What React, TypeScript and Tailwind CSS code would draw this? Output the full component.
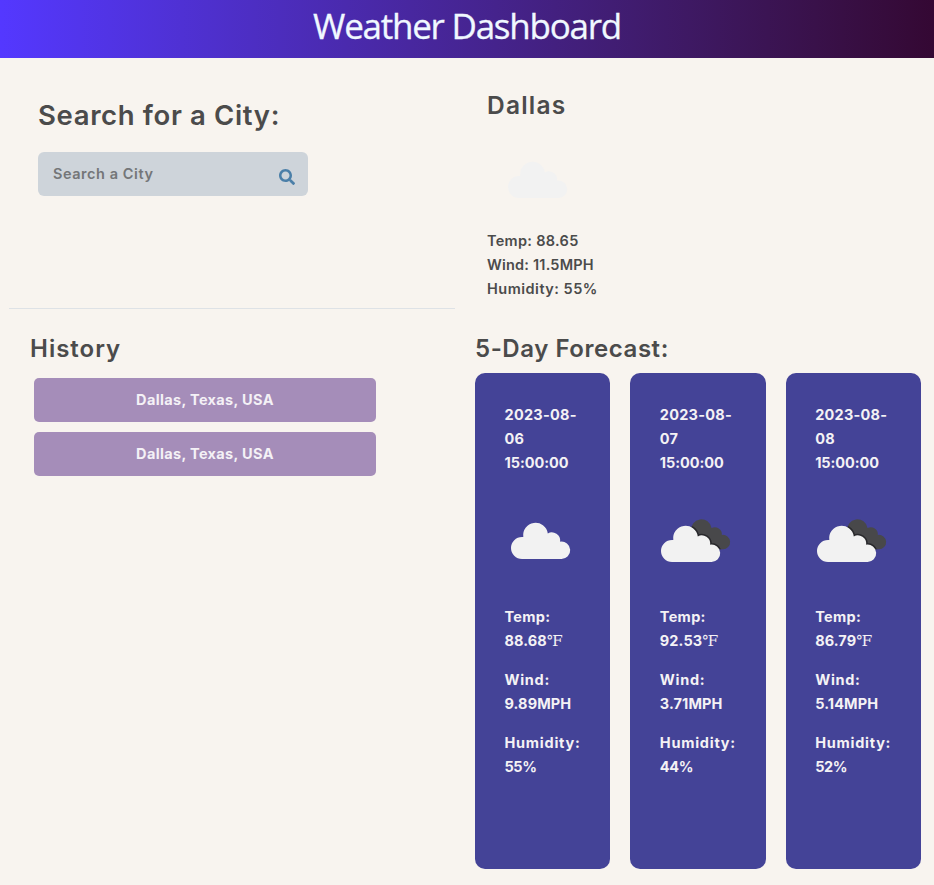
const history = ["Dallas, Texas, USA", "Dallas, Texas, USA"];

const forecast = [
  { date: "2023-08-06", time: "15:00:00", icon: "scattered", temp: "88.68", wind: "9.89MPH", humidity: "55%" },
  { date: "2023-08-07", time: "15:00:00", icon: "broken", temp: "92.53", wind: "3.71MPH", humidity: "44%" },
  { date: "2023-08-08", time: "15:00:00", icon: "broken", temp: "86.79", wind: "5.14MPH", humidity: "52%" },
];

const cloud =
  "M11 37a11 11 0 0 1 0-22H12.3A12.3 12.3 0 1 1 36.8 11.4A8.5 8.5 0 0 1 49.2 19.7A8.7 8.7 0 1 1 50.3 37Z";

function Cloud({ broken = false }: { broken?: boolean }) {
  return (
    <svg className="block size-[100px] shrink-0" viewBox="0 0 100 100" aria-hidden="true">
      {broken && (
        <>
          <clipPath id="behind">
            <path d={cloud} transform="translate(20.1 -6.4) scale(.83)" />
          </clipPath>
          <path d={cloud} transform="translate(36 27.600) scale(.83)" fill="#48484a" />
          <path d={cloud} transform="translate(16 34)" fill="#f2f2f2" stroke="#29292c" strokeWidth="3.2" clipPath="url(#behind)" />
          <path d={cloud} transform="translate(16 34)" fill="#f2f2f2" />
        </>
      )}
      {!broken && <path d={cloud} transform="translate(21 31)" fill="#f2f2f2" />}
    </svg>
  );
}

export default function App() {
  return (
    <div className="min-h-[885px] w-full bg-[#f8f4ef] font-['Inter',sans-serif] text-[#4b4b4b]">
      <header className="flex h-[58px] items-center justify-center bg-linear-to-r from-[#5438ff] to-[#340833] pb-[6px]">
        <h1 className="font-['Open_Sans',sans-serif] text-[35px] leading-[42px] font-medium tracking-[-1.25px] text-[#f0f8ff] [-webkit-text-stroke:0.3px_#f0f8ff]">Weather Dashboard</h1>
      </header>
      <main className="flex">
        <div className="w-[475px]">
          <section className="ml-[9px] h-[251px] w-[446px] border-b border-[#dee2e6] pt-[38px] pl-[29px]">
            <h2 className="text-[27.500px] leading-[38px] font-semibold tracking-[0.65px]">Search for a City:</h2>
            <div className="mt-[18px] flex h-11 w-[270px] items-center justify-between rounded-md bg-[#ced4da] pr-[13px] pl-[15px]">
              <span className="text-[14.500px] leading-6 font-semibold tracking-[0.55px] text-[#747678]">Search a City</span>
              <svg className="mt-[6px] size-4 fill-[#4b7fa8]" viewBox="0 0 512 512" aria-hidden="true">
                <path d="M505 442.7 405.3 343c-4.500-4.500-10.600-7-17-7H372c27.600-35.300 44-79.700 44-128C416 93.100 322.900 0 208 0S0 93.100 0 208s93.100 208 208 208c48.300 0 92.700-16.400 128-44v16.300c0 6.400 2.500 12.500 7 17l99.700 99.700c9.400 9.400 24.600 9.400 33.900 0l28.300-28.300c9.400-9.400 9.400-24.600.1-34zM208 336c-70.700 0-128-57.200-128-128 0-70.700 57.200-128 128-128 70.700 0 128 57.200 128 128 0 70.700-57.200 128-128 128z" />
              </svg>
            </div>
          </section>
          <section className="pt-[24px] pl-[30px]">
            <h2 className="text-[24px] leading-8 font-semibold tracking-[1px]">History</h2>
            <div className="mt-[13px] ml-1 flex w-[342px] flex-col gap-[10px]">
              {history.map((city, i) => (
                <button key={i} className="h-11 rounded-[5px] bg-[#a58db9] text-[14.500px] leading-6 font-bold tracking-[0.35px] text-[#f4f1f6]">{city}</button>
              ))}
            </div>
          </section>
        </div>
        <div className="w-[446px]">
          <section className="h-[251px] pt-[31px] pl-3">
            <h2 className="text-[24.500px] leading-8 font-semibold tracking-[1.2px]">Dallas</h2>
            <div className="mt-[9px] -ml-[0.500px]"><Cloud /></div>
            <div className="-mt-px text-[14.500px] leading-6 font-semibold">
              <p className="tracking-[0.3px]">Temp: 88.65</p>
              <p className="tracking-[0.200px]">Wind: 11.5MPH</p>
              <p className="tracking-[0.5px]">Humidity: 55%</p>
            </div>
          </section>
          <section className="pt-[24px]">
            <h2 className="text-[24px] leading-8 font-semibold tracking-[0.55px]">5-Day Forecast:</h2>
            <div className="mt-2 grid grid-cols-3 gap-5">
              {forecast.map((day) => (
                <article key={day.date} className="h-[496px] rounded-[10px] bg-[#444397] pt-[30px] pr-[25px] pl-[29.500px] text-[14.500px] leading-6 font-bold tracking-[0.1px] text-[#f4f2f5]">
                  <p className="pr-2"><span className="tracking-[0.25px]">{day.date}</span> <span className="tracking-[-0.05px]">{day.time}</span></p>
                  <div className="mt-[16px] -ml-[14.500px] h-[100px]"><Cloud broken={day.icon === "broken"} /></div>
                  <p className="mt-[14px]"><span className="block tracking-[0.3px]">Temp:</span>{day.temp}<span className="font-['Liberation_Serif','DejaVu_Serif',serif] text-[15px] leading-none font-normal tracking-normal">℉</span></p>
                  <p className="mt-[14.500px]"><span className="block tracking-[0.7px]">Wind:</span>{day.wind}</p>
                  <p className="mt-[15px]"><span className="block tracking-[0.75px]">Humidity:</span><span className="tracking-[-0.4px]">{day.humidity}</span></p>
                </article>
              ))}
            </div>
          </section>
        </div>
      </main>
    </div>
  );
}
